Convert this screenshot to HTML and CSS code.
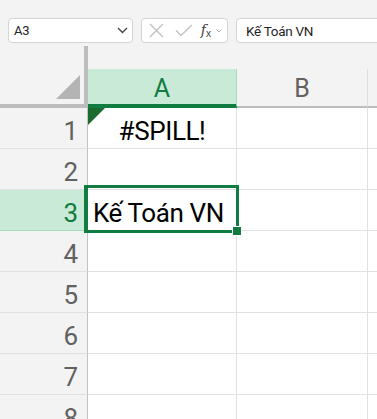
FILE: index.html
```html
<!DOCTYPE html>
<html lang="vi">

<head>
    <meta charset="UTF-8">
    <meta name="viewport" content="width=device-width, initial-scale=1.0">
    <title>Kế Toán VN - Sheet</title>
    <link rel="stylesheet" href="styles.css">
</head>

<body>
    <div class="toolbar">
        <div class="name-box">
            <span>A3</span>
            <svg class="chevron" width="11" height="7" viewBox="0 0 11 7">
                <polyline points="1,1 5.5,5.5 10,1" fill="none" stroke="#424242" stroke-width="1.3" />
            </svg>
        </div>

        <div class="fx-buttons">
            <svg class="icon-cancel" width="15" height="15" viewBox="0 0 15 15">
                <path d="M1 1 L14 14 M14 1 L1 14" stroke="#c2c2c2" stroke-width="1.4" fill="none" />
            </svg>
            <svg class="icon-enter" width="18" height="13" viewBox="0 0 18 13">
                <polyline points="1,6.5 6,11.5 17,1" fill="none" stroke="#c2c2c2" stroke-width="1.4" />
            </svg>
            <span class="fx"><i>f</i><sub>x</sub></span>
            <svg class="chevron-small" width="6" height="4" viewBox="0 0 6 4">
                <polyline points="0.5,0.5 3,3 5.5,0.5" fill="none" stroke="#b0b0b0" stroke-width="1" />
            </svg>
        </div>

        <div class="formula-input">Kế Toán VN</div>
    </div>

    <div class="sheet">
        <!-- header row -->
        <div class="corner"><div class="corner-arrow"></div></div>
        <div class="col-head active">A</div>
        <div class="col-head">B</div>
        <div class="col-head"></div>

        <div class="row-head">1</div>
        <div class="cell center"><span class="error-flag"></span>#SPILL!</div>
        <div class="cell"></div>
        <div class="cell"></div>

        <div class="row-head">2</div>
        <div class="cell"></div>
        <div class="cell"></div>
        <div class="cell"></div>

        <div class="row-head active">3</div>
        <div class="cell selected">
            Kế Toán VN
            <div class="selection"><div class="fill-handle"></div></div>
        </div>
        <div class="cell"></div>
        <div class="cell"></div>

        <div class="row-head">4</div>
        <div class="cell"></div>
        <div class="cell"></div>
        <div class="cell"></div>

        <div class="row-head">5</div>
        <div class="cell"></div>
        <div class="cell"></div>
        <div class="cell"></div>

        <div class="row-head">6</div>
        <div class="cell"></div>
        <div class="cell"></div>
        <div class="cell"></div>

        <div class="row-head">7</div>
        <div class="cell"></div>
        <div class="cell"></div>
        <div class="cell"></div>

        <div class="row-head">8</div>
        <div class="cell"></div>
        <div class="cell"></div>
        <div class="cell"></div>
    </div>
</body>

</html>
```

FILE: styles.css
```css
body {
    margin: 0;
    height: 100vh;
    overflow: hidden;
    background: #f3f3f3;
    font-family: Roboto, "Liberation Sans", sans-serif;
}

/* Toolbar / formula bar */
.toolbar {
    display: flex;
    gap: 8px;
    padding: 18px 0 0 8px;
}

.name-box,
.fx-buttons,
.formula-input {
    box-sizing: border-box;
    height: 25px;
    background: #fff;
    border: 1px solid #d4d4d4;
    border-radius: 4px;
    display: flex;
    align-items: center;
}

.name-box {
    width: 125px;
    padding: 0 4px 0 5px;
    justify-content: space-between;
    font-size: 13px;
    letter-spacing: -0.3px;
    color: #242424;
}

.fx-buttons {
    width: 87px;
    padding: 0 5px 0 7px;
}

.icon-cancel {
    margin-right: 11px;
}

.icon-enter {
    margin-right: 8px;
}

.fx {
    font-family: "DejaVu Serif", "Liberation Serif", serif;
    font-size: 14px;
    color: #424242;
    line-height: 1;
    margin-right: 5px;
}

.fx sub {
    font-family: "Liberation Sans", sans-serif;
    font-size: 10px;
    vertical-align: -2px;
}

.formula-input {
    flex: 1;
    margin-right: -20px;
    padding-left: 9px;
    font-size: 13.5px;
    letter-spacing: -0.3px;
    color: #242424;
}

/* Grid */
.sheet {
    margin-top: 3px;
    display: grid;
    grid-template-columns: 88px 149px 131px 60px;
    grid-template-rows: 62px repeat(8, 41px);
    width: max-content;
}

.corner {
    box-sizing: border-box;
    border-right: 4px solid #bdbdbd;
    border-bottom: 4px solid #bdbdbd;
    display: flex;
    align-items: flex-end;
    justify-content: flex-end;
    padding: 0 4px 5px 0;
}

.corner-arrow {
    width: 24px;
    height: 24px;
    background: #b4b4b4;
    clip-path: polygon(100% 0, 100% 100%, 0 100%);
}

.col-head {
    align-self: end;
    box-sizing: border-box;
    height: 39px;
    border-right: 1px solid #dedede;
    border-bottom: 2px solid #bdbdbd;
    display: flex;
    align-items: center;
    justify-content: center;
    padding-top: 1px;
    font-size: 25px;
    color: #616161;
}

.col-head.active {
    background: #caead8;
    color: #107c41;
    border-right-color: #a9dbbd;
    border-bottom: 4px solid #107c41;
    padding-top: 3px;
}

.row-head {
    box-sizing: border-box;
    border-right: 1px solid #c2c2c2;
    border-bottom: 1px solid #e1e1e1;
    display: flex;
    align-items: flex-end;
    justify-content: flex-end;
    padding: 0 9px 4px 0;
    font-size: 26px;
    line-height: 26px;
    color: #616161;
}

.row-head.active {
    background: #caead8;
    color: #107c41;
    border-bottom-color: #a9dbbd;
}

.cell {
    position: relative;
    box-sizing: border-box;
    background: #fff;
    border-right: 1px solid #e1e1e1;
    border-bottom: 1px solid #e1e1e1;
    display: flex;
    align-items: flex-end;
    padding: 0 5px 4px;
    font-size: 26px;
    line-height: 26px;
    letter-spacing: -0.4px;
    color: #000;
    white-space: nowrap;
}

.cell.center {
    justify-content: center;
}

.cell.selected {
    z-index: 2;
}

.error-flag {
    position: absolute;
    top: 0;
    left: 0;
    width: 17px;
    height: 17px;
    background: #1a6b2c;
    clip-path: polygon(0 0, 100% 0, 0 100%);
}

.selection {
    position: absolute;
    top: -5px;
    left: -4px;
    right: -3px;
    bottom: -3px;
    border: 3px solid #107c41;
    border-left-width: 4px;
    pointer-events: none;
}

.fill-handle {
    position: absolute;
    right: -5px;
    bottom: -5px;
    width: 8px;
    height: 8px;
    background: #107c41;
    box-shadow: 0 0 0 1px #fff;
}
```
